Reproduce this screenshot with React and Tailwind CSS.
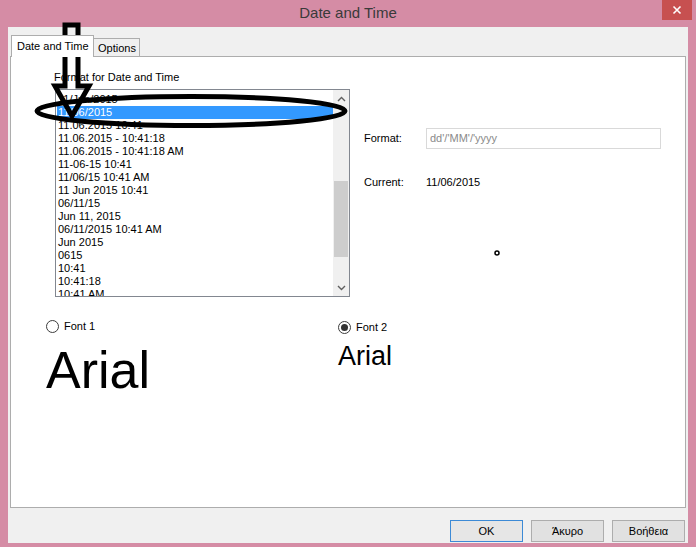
import React from "react";

// ─── List data ────────────────────────────────────────────────────────────────
const formats = [
  "11/Jun/2015",
  "11/06/2015",
  "11.06.2015 10:41",
  "11.06.2015 - 10:41:18",
  "11.06.2015 - 10:41:18 AM",
  "11-06-15 10:41",
  "11/06/15 10:41 AM",
  "11 Jun 2015 10:41",
  "06/11/15",
  "Jun 11, 2015",
  "06/11/2015 10:41 AM",
  "Jun 2015",
  "0615",
  "10:41",
  "10:41:18",
  "10:41 AM",
];
const SELECTED = 1;

const Caret = ({ up }) => (
  <svg width="9" height="6" viewBox="0 0 9 6">
    <polyline
      points={up ? "1,5 4.5,1.5 8,5" : "1,1 4.5,4.5 8,1"}
      fill="none"
      stroke="#606060"
      strokeWidth="1.4"
    />
  </svg>
);

const Radio = ({ checked }) => (
  <span className="flex h-[13px] w-[13px] items-center justify-center rounded-full border border-[#3c3c3c] bg-white">
    {checked && <span className="h-[7px] w-[7px] rounded-full bg-[#333]" />}
  </span>
);

const Button = ({ children, primary }) => (
  <button
    className={
      primary
        ? "flex h-[22px] w-[73px] items-center justify-center border border-[#3c8ad6] bg-[#e6e6e6] text-[11px] text-black"
        : "flex h-[22px] w-[73px] items-center justify-center border border-[#adadad] bg-[#e1e1e1] text-[11px] text-black"
    }
  >
    {children}
  </button>
);

export default function App() {
  return (
    <div className="relative flex h-[547px] w-[696px] flex-col overflow-hidden bg-[#d58ca5] font-['Liberation_Sans',Arial,sans-serif] text-[11px] text-black">
      {/* title bar */}
      <div className="flex h-[27px] shrink-0">
        <div className="w-[34px]" />
        <div className="flex flex-1 items-center justify-center pb-[1px] text-[15px] text-[#3a3a3a]">
          Date and Time
        </div>
        <div className="mr-[4px] flex h-[20px] w-[30px] items-center justify-center bg-[#c75050]">
          <svg width="10" height="10" viewBox="0 0 10 10">
            <path d="M1.5 1.5 L8.5 8.5 M8.5 1.5 L1.5 8.5" stroke="#fff" strokeWidth="1.6" />
          </svg>
        </div>
      </div>

      {/* client area */}
      <div className="mx-[8px] flex h-[516px] flex-col bg-[#f0f0f0] pt-[8px]">
        {/* tabs */}
        <div className="relative z-10 -mb-px flex h-[22px] items-end pl-[3px]">
          <div className="flex h-[22px] w-[83px] items-center border border-b-0 border-[#adadad] bg-white pl-[5px] pb-[1px]">
            Date and Time
          </div>
          <div className="mb-[1px] flex h-[18px] w-[46px] items-center border border-b-0 border-l-0 border-[#adadad] bg-[#f0f0f0] pl-[4px] pt-[1px]">
            Options
          </div>
        </div>

        {/* tab page */}
        <div className="ml-[2px] h-[452px] w-[676px] border border-[#adadad] bg-white pl-[35px] pt-[14px]">
          <div className="ml-[8px] h-[13px] leading-[13px]">Format for Date and Time</div>

          <div className="ml-[8px] mt-[5px] flex">
            {/* listbox */}
            <div className="ml-[1px] flex h-[208px] w-[295px] border border-[#828790] bg-white">
              <div className="flex-1 overflow-hidden pl-[1px] pt-[3px]">
                {formats.map((f, i) => (
                  <div
                    key={f}
                    className={
                      i === SELECTED
                        ? "h-[13px] whitespace-nowrap bg-[#3399ff] px-[1px] leading-[13px] text-white"
                        : "h-[13px] whitespace-nowrap px-[1px] leading-[13px]"
                    }
                  >
                    {f}
                  </div>
                ))}
              </div>
              <div className="flex w-[16px] flex-col bg-[#f0f0f0]">
                <div className="flex h-[17px] items-center justify-center">
                  <Caret up />
                </div>
                <div className="flex-1 px-[1px]">
                  <div className="mt-[74px] h-[76px] bg-[#cdcdcd]" />
                </div>
                <div className="flex h-[17px] items-center justify-center">
                  <Caret />
                </div>
              </div>
            </div>

            {/* format / current */}
            <div className="ml-[14px] pt-[39px]">
              <div className="flex h-[21px] items-center">
                <span className="w-[62px]">Format:</span>
                <div className="flex h-[21px] w-[235px] items-center border border-[#d9d9d9] pl-[3px] text-[#8a8a8a]">
                  dd'/'MM'/'yyyy
                </div>
              </div>
              <div className="mt-[27px] flex h-[13px] items-center">
                <span className="w-[62px]">Current:</span>
                <span>11/06/2015</span>
              </div>
            </div>
          </div>

          {/* font choices */}
          <div className="mt-[23px] flex">
            <div className="flex w-[292px] flex-col">
              <label className="flex h-[13px] items-center gap-[5px]">
                <Radio />
                <span>Font 1</span>
              </label>
              <div className="mt-[11px] text-[52px] leading-none">Arial</div>
            </div>
            <div className="flex flex-col pt-[1px]">
              <label className="flex h-[13px] items-center gap-[5px]">
                <Radio checked />
                <span>Font 2</span>
              </label>
              <div className="mt-[9px] text-[27px] leading-none">Arial</div>
            </div>
          </div>
        </div>

        {/* dialog buttons */}
        <div className="mt-[12px] flex justify-end gap-[8px] pr-[3px]">
          <Button primary>OK</Button>
          <Button>Άκυρο</Button>
          <Button>Βοήθεια</Button>
        </div>
      </div>

      {/* hand-drawn annotation + stray cursor */}
      <svg
        className="pointer-events-none absolute left-0 top-0"
        width="696"
        height="547"
        viewBox="0 0 696 547"
      >
        <path
          d="M65 25 L78 25 L78 86 L89 86 L72 116 L55 86 L65 86 Z"
          fill="none"
          stroke="#000"
          strokeWidth="5"
        />
        <ellipse cx="191" cy="111" rx="154" ry="14.5" fill="none" stroke="#000" strokeWidth="5" />
        <circle cx="497" cy="253" r="2" fill="#fff" stroke="#000" strokeWidth="1.5" />
      </svg>
    </div>
  );
}
